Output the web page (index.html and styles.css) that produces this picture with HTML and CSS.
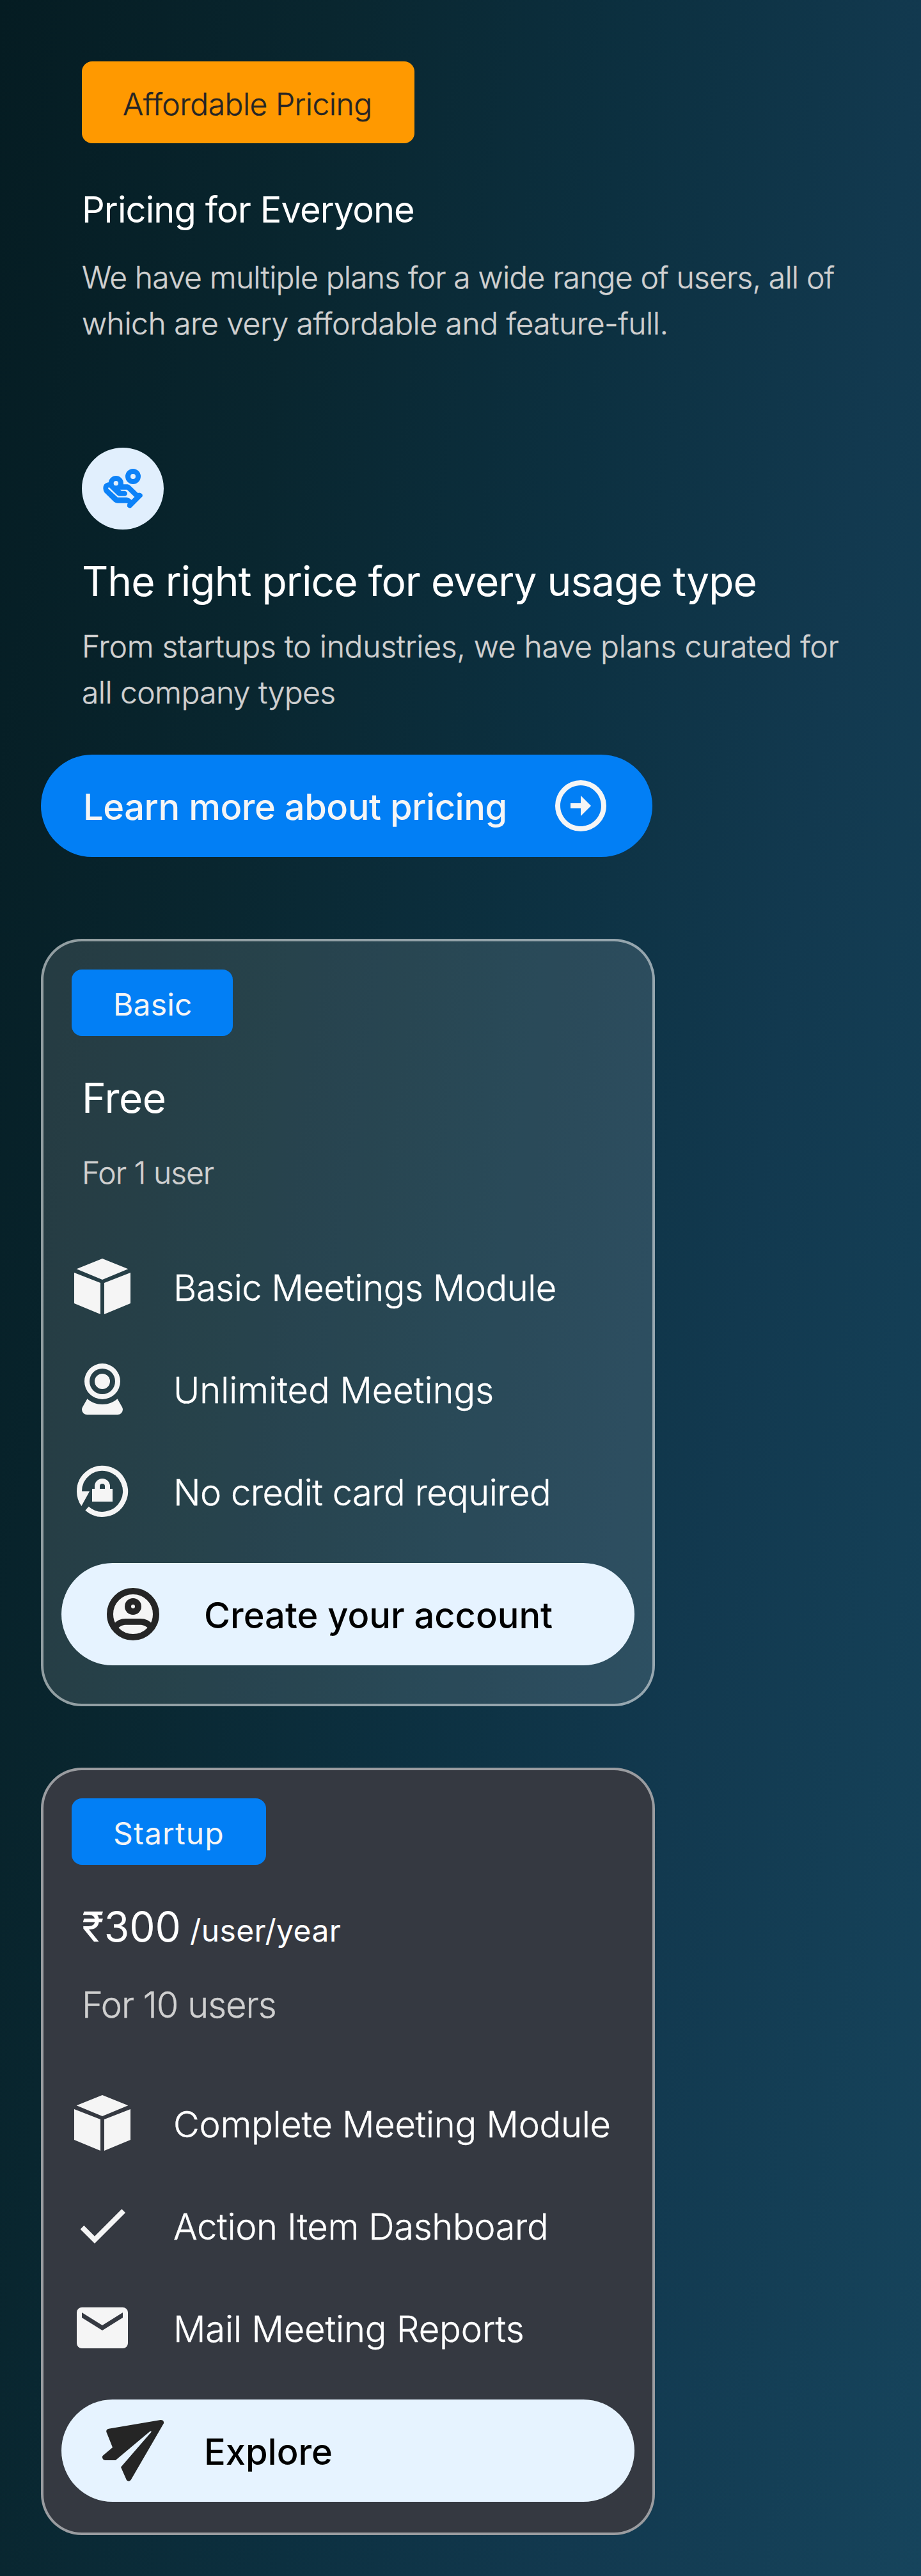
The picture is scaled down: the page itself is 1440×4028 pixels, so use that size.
FILE: index.html
```html
<!DOCTYPE html>
<html lang="en">
<head>
<meta charset="utf-8">
<title>Pricing</title>
<link rel="stylesheet" href="styles.css">
</head>
<body>
<svg class="symbols" width="0" height="0" aria-hidden="true">
  <symbol id="cube" viewBox="66 72 288 288">
    <path d="M210 84 331 133 210 183 89 133ZM78 150 201 198V345L78 294ZM342 150 219 198V345L342 294Z"/>
  </symbol>
</svg>
<main class="page">
  <header class="intro">
    <span class="flag"><span class="ls-50">Affordable Pricing</span></span>
    <h1 class="title">Pricing for Everyone</h1>
    <p class="copy"><span class="ls-80">We have multiple plans for a wide range of users, all of</span><br><span class="ls-50">which are very affordable and feature-full.</span></p>
  </header>

  <section class="feature">
    <div class="badge-icon">
      <svg viewBox="84 60 384 384">
        <circle cx="324" cy="195" r="24" fill="none" stroke="#0d82f8" stroke-width="24"/>
        <path fill="#0d82f8" d="M184 250Q184 228 207 223L240 226 280 232H298Q306 233 312 239L347 273Q356 269 366 277Q370 283 368 289L315 342Q306 346 298 338Q295 330 299 321Q293 320 288 320H252Q243 320 235 314L190 270Q184 260 184 250Z"/>
        <circle cx="244" cy="227" r="23" fill="#e1effd" stroke="#0d82f8" stroke-width="24"/>
        <path fill="#e1effd" d="M264 257H296L331 291 317 305Q308 296 295 293H252L207 252Q206 246 213 247L250 283Q254 287 262 287H284Q296 286 297 275Q296 264 285 263H270Z"/>
      </svg>
    </div>
    <h2 class="subtitle">The right price for every usage type</h2>
    <p class="copy copy-tight"><span class="ls-27">From startups to industries, we have plans curated for</span><br><span class="ls-58">all company types</span></p>
  </section>

  <a class="learn">
    <span class="button-label ls-46">Learn more about pricing</span>
    <svg class="icon light" viewBox="0 0 24 24"><path d="M12 20c-4.410 0-8-3.590-8-8s3.590-8 8-8 8 3.590 8 8-3.590 8-8 8m0-18A10 10 0 1 0 12 22 10 10 0 0 0 12 2m0 9H8v2h4v3l4-4-4-4z"/></svg>
  </a>

  <section class="plan plan-basic">
    <span class="tag"><span class="ls-p20">Basic</span></span>
    <h3 class="price ls-46">Free</h3>
    <p class="seats ls-100">For 1 user</p>
    <ul class="perks">
      <li><svg class="icon light"><use href="#cube"/></svg><span class="ls-46">Basic Meetings Module</span></li>
      <li><svg class="icon light" viewBox="0 0 24 24"><path d="M12 2A7 7 0 0 1 19 9 7 7 0 0 1 12 16 7 7 0 0 1 5 9 7 7 0 0 1 12 2M12 4A5 5 0 0 0 7 9 5 5 0 0 0 12 14 5 5 0 0 0 17 9 5 5 0 0 0 12 4M12 6A3 3 0 0 1 15 9 3 3 0 0 1 12 12 3 3 0 0 1 9 9 3 3 0 0 1 12 6M6 22A2 2 0 0 1 4 20C4 19.62 4.1 19.27 4.29 18.97L6.11 15.81C7.69 17.17 9.75 18 12 18 14.25 18 16.31 17.17 17.89 15.81L19.71 18.97C19.9 19.27 20 19.62 20 20A2 2 0 0 1 18 22H6Z"/></svg><span>Unlimited Meetings</span></li>
      <li><svg class="icon light" viewBox="66 1032 288 288"><path fill="none" stroke="#f5f5f5" stroke-width="24" d="M102 1176A108 108 0 1 1 138 1256M186 1166V1152A24 24 0 0 1 234 1152V1166"/><path d="M90 1176H150L112 1245Q90 1214 90 1176ZM162 1164H258V1224H162Z"/></svg><span class="ls-50">No credit card required</span></li>
    </ul>
    <a class="action">
      <svg class="icon" viewBox="30 30 288 288"><g fill="#f5f5f5" stroke="#252525" stroke-width="30"><circle cx="174" cy="174" r="108"/><path fill="none" stroke-width="29" d="M90 233Q112 209 140 209.500H208Q236 209 258 233"/></g><circle cx="174" cy="138" r="39" fill="#252525"/><circle cx="174" cy="138" r="9" fill="#f5f5f5"/></svg>
      <span class="button-label">Create your account</span>
    </a>
  </section>

  <section class="plan plan-startup">
    <span class="tag"><span class="ls-p110">Startup</span></span>
    <h3 class="price">₹300<span class="unit ls-p40">/user/year</span></h3>
    <p class="seats seats-large ls-100">For 10 users</p>
    <ul class="perks">
      <li><svg class="icon light"><use href="#cube"/></svg><span class="ls-27">Complete Meeting Module</span></li>
      <li><svg class="icon light" viewBox="0 0 24 24"><path d="M9 16.170 4.830 12 3.410 13.410 9 19 21 7 19.590 5.590Z"/></svg><span class="ls-34">Action Item Dashboard</span></li>
      <li><svg class="icon light" viewBox="0 0 24 24"><path fill-rule="evenodd" d="M4 4H20A2 2 0 0 1 22 6V18A2 2 0 0 1 20 20H4A2 2 0 0 1 2 18V6A2 2 0 0 1 4 4ZM4 6V8L12 13 20 8V6L12 11Z"/></svg><span class="ls-12">Mail Meeting Reports</span></li>
    </ul>
    <a class="action">
      <svg class="icon" viewBox="30 42 288 288"><path fill="#252525" d="M60 83 303 42Q320 42 318 58L164 323Q155 334 144 325L117 263 260 98Q260 93 254 95L92 231H42Q29 228 30 214Q31 210 36 206L78 171 49 98Q47 86 60 83Z"/></svg>
      <span class="button-label">Explore</span>
    </a>
  </section>
</main>
</body>
</html>
```
FILE: styles.css
```css
* { box-sizing: border-box; }
body { margin: 0; font-family: Inter, "Noto Sans", sans-serif; font-weight: 300; color: #fff; }
h1, h2, h3, p, ul { margin: 0; padding: 0; font-weight: inherit; }
ul { list-style: none; }
.symbols { display: block; position: absolute; }

.page {
  display: flex; flex-direction: column; align-items: flex-start;
  width: 1440px; height: 4028px; padding: 96px 64px 64px;
  background: linear-gradient(98deg, #051c22 0%, #09262f 26%, #0c3040 50%, #12394f 72%, #16445c 100%);
}
.intro, .feature { display: flex; flex-direction: column; align-items: flex-start; padding-left: 64px; }

.flag {
  display: flex; align-items: center; width: 520px; height: 128px; padding: 5px 0 0 64px;
  border-radius: 16px; background: #ff9900; color: #252525; font-size: 48px; line-height: 72px;
}
.title { margin-top: 64px; font-size: 56px; line-height: 80px; font-weight: 400; letter-spacing: -0.9px; }
.copy { margin-top: 30px; font-size: 48px; line-height: 72px; color: #d0d0d0; white-space: nowrap; }
.copy-tight { margin-top: 22px; }
.flag, .copy, .seats, .perks { -webkit-text-stroke: 0.4px currentColor; }

.feature { margin-top: 158px; }
.badge-icon { width: 128px; height: 128px; border-radius: 50%; background: #e1effd; }
.badge-icon svg { display: block; width: 128px; height: 128px; }
.subtitle { margin-top: 37px; font-size: 64px; line-height: 88px; font-weight: 400; letter-spacing: -0.95px; }

.icon { display: block; flex: none; width: 96px; height: 96px; }
.light { fill: #f5f5f5; }
.button-label { padding-top: 3px; font-size: 56px; line-height: 80px; font-weight: 500; white-space: nowrap; }

.learn {
  display: flex; align-items: center; justify-content: space-between; width: 956px; height: 160px;
  margin-top: 61px; padding: 0 64px 0 66px; border-radius: 80px; background: #027ff5; color: #f5f5f5;
}

.plan {
  display: flex; flex-direction: column; width: 960px; height: 1200px; margin-top: 96px; padding: 44px 28px 0;
  border: 4px solid rgba(255, 255, 255, .5); border-radius: 64px;
}
.plan-basic { margin-top: 128px; background: rgba(255, 255, 255, .12); }
.plan-startup { background: #353941; }
.tag {
  display: flex; align-items: center; align-self: flex-start; width: 252px; height: 104px; margin-left: 16px; padding: 5px 0 0 65px;
  border-radius: 16px; background: #027ff5; color: #f5f5f5; font-size: 48px; line-height: 72px; font-weight: 400;
}
.plan-startup .tag { width: 304px; }
.price { margin: 53px 0 0 32px; font-size: 64px; line-height: 88px; font-weight: 400; }
.unit { margin-left: 14px; font-size: 48px; line-height: 1; }
.seats { margin: 37px 0 0 32px; font-size: 48px; line-height: 72px; color: #d0d0d0; }
.seats-large { margin-top: 38px; font-size: 56px; line-height: 80px; }
.perks { display: flex; flex-direction: column; gap: 64px; margin: 94px 0 0 16px; }
.plan-startup .perks { margin-top: 97px; }
.perks li { display: flex; align-items: center; gap: 63px; height: 96px; font-size: 56px; line-height: 80px; white-space: nowrap; }
.perks span { padding-top: 3px; }
.action {
  display: flex; align-items: center; gap: 63px; width: 896px; height: 160px; margin-top: 64px; padding: 0 64px;
  border-radius: 80px; background: #e6f3ff; color: #000;
}

.ls-12 { letter-spacing: -0.12px; }
.ls-27 { letter-spacing: -0.27px; }
.ls-34 { letter-spacing: -0.34px; }
.ls-46 { letter-spacing: -0.46px; }
.ls-50 { letter-spacing: -0.5px; }
.ls-58 { letter-spacing: -0.58px; }
.ls-80 { letter-spacing: -0.8px; }
.ls-100 { letter-spacing: -1px; }
.ls-p20 { letter-spacing: 0.2px; }
.ls-p40 { letter-spacing: 0.4px; }
.ls-p110 { letter-spacing: 1.1px; }
```
